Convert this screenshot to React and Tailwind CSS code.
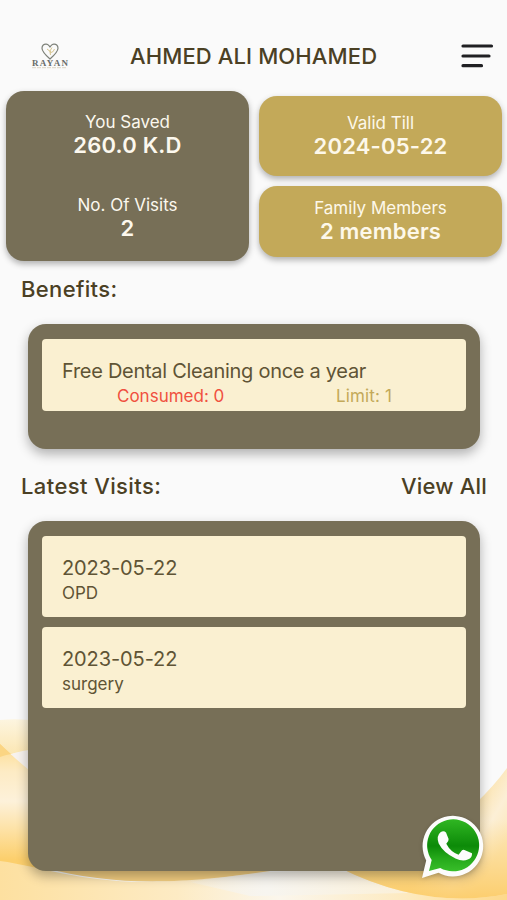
import React from 'react'

const visits = [
  { id: 1, date: '2023-05-22', type: 'OPD' },
  { id: 2, date: '2023-05-22', type: 'surgery' }
]

const benefits = [
  { id: 1, title: 'Free Dental Cleaning once a year', consumed: 0, limit: 1 }
]

function Waves(){
  return (
    <svg className="absolute bottom-0 left-0 w-full h-[190px]" viewBox="0 0 507 190" fill="none">
      <defs>
        <linearGradient id="leftBand" x1="0" y1="0" x2="0" y2="1">
          <stop offset="0" stopColor="#fddc90" />
          <stop offset=".2" stopColor="#fdebc4" />
          <stop offset=".42" stopColor="#fdf1da" />
          <stop offset=".65" stopColor="#fde0a0" />
          <stop offset=".85" stopColor="#fccf6c" />
        </linearGradient>
        <linearGradient id="topBand" x1="0" y1="0" x2="0" y2="1">
          <stop offset="0" stopColor="#fdf5e0" />
          <stop offset="1" stopColor="#fbe5ae" />
        </linearGradient>
        <linearGradient id="floor" x1="0" y1="0" x2="1" y2="0">
          <stop offset="0" stopColor="#fde0a0" />
          <stop offset=".35" stopColor="#fdebc4" />
          <stop offset=".55" stopColor="#fbf6ec" />
          <stop offset=".8" stopColor="#fdeac0" />
          <stop offset="1" stopColor="#fdd88b" />
        </linearGradient>
        <linearGradient id="midGlow" x1="190" y1="0" x2="410" y2="0" gradientUnits="userSpaceOnUse">
          <stop offset="0" stopColor="#f5f2ea" stopOpacity=".3" />
          <stop offset=".35" stopColor="#f7f5f0" />
          <stop offset="1" stopColor="#fbf0d8" />
        </linearGradient>
        <linearGradient id="rightBand" x1="457" y1="100" x2="507" y2="130" gradientUnits="userSpaceOnUse">
          <stop offset="0" stopColor="#fbdf9f" />
          <stop offset=".6" stopColor="#fcefd6" />
          <stop offset="1" stopColor="#fce7ba" />
        </linearGradient>
        <linearGradient id="rightFade" x1="0" y1="110" x2="0" y2="190" gradientUnits="userSpaceOnUse">
          <stop offset="0" stopColor="#fccf6c" stopOpacity="0" />
          <stop offset="1" stopColor="#fccb65" stopOpacity=".9" />
        </linearGradient>
      </defs>
      <path d="M0 10 Q18 8 40 11 V42 Q18 40 0 48Z" fill="url(#topBand)" />
      <path d="M10 45 Q20 40 40 39 V72Z" fill="#f7f2ee" />
      <path d="M0 34 Q16 50 46 74 V170 H0Z" fill="url(#leftBand)" />
      <path d="M0 34 L11 44 Q5 45 0 47Z" fill="#fbd583" />
      <path d="M0 151 C45 157 90 176 170 171 S290 153 360 170 S470 184 507 176 V190 H0Z" fill="url(#floor)" />
      <path d="M45 158 H290 Q220 169 174 171 Q105 174 45 158Z" fill="#f2cd80" />
      <path d="M190 172 Q290 157 350 162 Q390 175 410 183 L250 186Z" fill="url(#midGlow)" />
      <path d="M340 158 V140 H475 V94 Q494 76 507 58 V184 Q425 200 340 158Z" fill="url(#rightBand)" />
      <path d="M340 158 V140 H475 V94 Q494 76 507 58 V184 Q425 200 340 158Z" fill="url(#rightFade)" />
    </svg>
  )
}

function Logo(){
  return (
    <svg width="40" height="28" viewBox="0 0 40 28" fill="none">
      <path d="M19 17 C14 12.5 11 9.5 11 6.2 C11 3.2 13 2 15.2 2.2 C17.5 2.4 19 4.5 19 5.5 C19 4.5 20.5 2.4 22.8 2.2 C25 2 27 3.2 27 6.2 C27 9.5 24 12.5 19 17Z" stroke="#7d8179" strokeWidth="1.2" />
      <path d="M16 7 L20 10 M21 5.5 Q17.5 9 19.5 13 M19 11 Q23 10 23.5 7" stroke="#d8c791" strokeWidth="1" />
      <text x="1" y="23.5" textLength="36" fontSize="9" fontWeight="700" fontFamily="Liberation Serif, serif" fill="#686c6b">RAYAN</text>
      <path d="M1 25.7 H36" stroke="#d3cdb9" strokeWidth=".8" strokeDasharray="4 1" />
    </svg>
  )
}

function WhatsAppIcon(){
  return (
    <svg width="64" height="66" viewBox="0 0 64 66" fill="none" className="drop-shadow-sm">
      <defs>
        <linearGradient id="wa" x1="0" y1="6" x2="0" y2="60" gradientUnits="userSpaceOnUse">
          <stop offset="0" stopColor="#2fb522" />
          <stop offset=".48" stopColor="#0c8a08" />
          <stop offset=".7" stopColor="#25a81a" />
          <stop offset="1" stopColor="#3cc32d" />
        </linearGradient>
      </defs>
      <path d="M1 64 L5.2 46.5 A30.3 30.3 0 1 1 17.5 58.8Z" fill="#fcfcfc" />
      <path d="M8 57 L10.7 46 A26 26 0 1 1 19.3 53.9Z" fill="url(#wa)" />
      <path d="M19.5 18.3 Q22.8 16.3 25 18.6 L27.6 25 Q28 27 25.3 29.8 Q29.5 38 37.6 40.8 L40.8 36.6 Q41.8 35.4 43.4 36 L51 39.3 Q51.6 43.6 46.8 45.6 Q41.5 48 34.5 44.5 Q22.2 38.6 17.7 29.5 Q15 22 19.5 18.3Z" fill="#fcfcfc" />
    </svg>
  )
}

function Stat({ label, value }){
  return (
    <div className="text-center">
      <p className="text-[17px] leading-[22px]">{label}</p>
      <p className="text-[22px] leading-[25px] font-semibold tracking-[0.2px]">{value}</p>
    </div>
  )
}

export default function App(){
  return (
    <div className="relative h-[900px] w-[507px] overflow-hidden bg-[#fafafa] font-['Inter',sans-serif] text-[#4b4024]">
      <Waves />

      <div className="relative flex h-full flex-col">
        <header className="flex h-[91px] items-start pl-[31px] pr-[13px] pt-[42px]">
          <Logo />
          <h1 className="ml-[59px] text-[22px] leading-[28px] font-medium tracking-[0.12px] whitespace-nowrap">AHMED ALI MOHAMED</h1>
          <button aria-label="Menu" className="ml-auto">
            <svg width="34" height="28" viewBox="0 0 34 28" stroke="#202023" strokeWidth="3.2" strokeLinecap="round">
              <path d="M3 4 H31.5 M3 14 H29 M3 23.7 H21.5" />
            </svg>
          </button>
        </header>

        <section className="flex h-[170px] gap-[10px] pl-[6px] pr-[5px]">
          <div className="flex flex-1 flex-col items-center gap-[36px] rounded-[18px] bg-[#776f57] pt-[20px] text-[#fcf8ee] shadow-[0_3px_6px_rgba(0,0,0,0.3)]">
            <Stat label="You Saved" value="260.0 K.D" />
            <Stat label="No. Of Visits" value="2" />
          </div>
          <div className="flex flex-1 flex-col gap-[10px] pt-[5px] text-[#fdf8ea]">
            <div className="h-[80px] rounded-[18px] bg-[#c3a959] pt-[16px] shadow-[0_3px_6px_rgba(0,0,0,0.3)]">
              <Stat label="Valid Till" value="2024-05-22" />
            </div>
            <div className="h-[71px] rounded-[18px] bg-[#c3a959] pt-[11px] shadow-[0_3px_6px_rgba(0,0,0,0.3)]">
              <Stat label="Family Members" value="2 members" />
            </div>
          </div>
        </section>

        <h2 className="mt-[14px] pl-[21px] text-[22px] leading-[28px] font-medium tracking-[0.35px]">Benefits:</h2>

        <section className="mt-[20.5px] mr-[27px] ml-[28px] h-[125px] shrink-0 rounded-[18px] bg-[#776f57] px-[14px] pt-[15px] shadow-[0_5px_12px_rgba(0,0,0,0.3)]">
          {benefits.map(b => (
            <div key={b.id} className="h-[72px] rounded bg-[#faf0d1] pt-[20.5px]">
              <p className="pl-[20px] text-[20px] leading-[24px] tracking-[-0.29px] text-[#5f5435]">{b.title}</p>
              <div className="flex justify-between pr-[74px] pl-[75px] text-[17px] leading-[26px]">
                <span className="text-[#f0503f]">Consumed: {b.consumed}</span>
                <span className="tracking-[0.15px] text-[#c3a959]">Limit: {b.limit}</span>
              </div>
            </div>
          ))}
        </section>

        <div className="mt-[23.5px] flex justify-between pl-[21px] pr-[20px] text-[22px] leading-[28px] font-medium">
          <h2 className="tracking-[0.4px]">Latest Visits:</h2>
          <a className="tracking-[0.2px]">View All</a>
        </div>

        <section className="mt-[20.5px] mr-[27px] ml-[28px] flex h-[350px] shrink-0 flex-col gap-[10px] rounded-[18px] bg-[#776f57] px-[14px] pt-[15px] shadow-[0_5px_12px_rgba(0,0,0,0.3)]">
          {visits.map(v => (
            <div key={v.id} className="h-[81px] rounded bg-[#faf0d1] pt-[20.5px] pl-[20px] text-[#5f5435]">
              <p className="text-[20px] leading-[24px] tracking-[-0.1px]">{v.date}</p>
              <p className="text-[17px] leading-[26px]">{v.type}</p>
            </div>
          ))}
        </section>
      </div>

      <button aria-label="WhatsApp" className="absolute left-[421px] top-[814px]">
        <WhatsAppIcon />
      </button>
    </div>
  )
}
